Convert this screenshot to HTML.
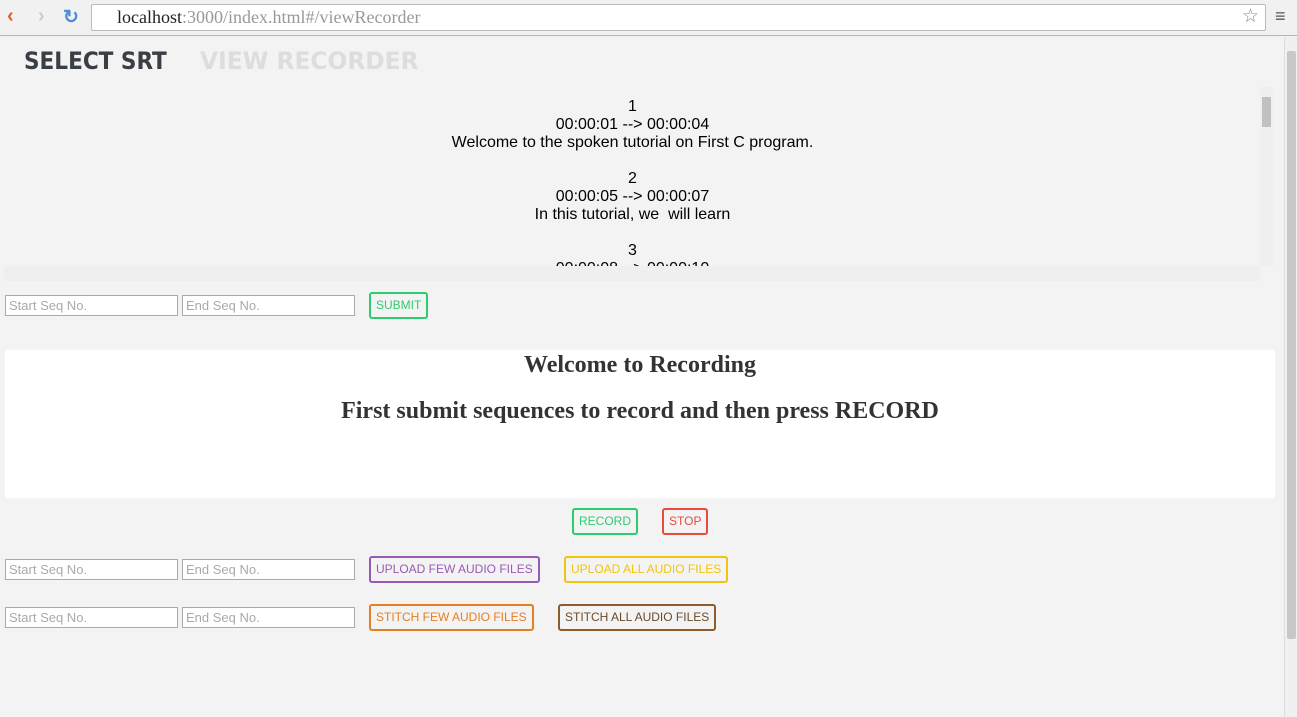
<!DOCTYPE html>
<html><head><meta charset="utf-8"><style>
*{box-sizing:border-box}
body{margin:0;width:1297px;height:717px;overflow:hidden;font-family:"Liberation Sans",sans-serif;background:#f2f2f2;position:relative}
.chrome{position:absolute;left:0;top:0;width:1297px;height:36px;background:#f1f1f1;border-bottom:1px solid #b5b5b5}
.url{position:absolute;left:91px;top:4px;width:1175px;height:27px;background:#fff;border:1px solid #bbb;border-radius:2px;font-family:"Liberation Serif",serif;font-size:18px;line-height:25px;padding-left:25px;color:#999}
.url b{font-weight:normal;color:#222}
.page{position:absolute;left:0;top:37px;width:1284px;height:680px;background:#f3f3f3}
.sb{position:absolute;left:1284px;top:37px;width:13px;height:680px;background:#f0f0f0;border-left:1px solid #ddd}
.sb div{position:absolute;left:2px;top:14px;width:9px;height:588px;background:#c8c8c8;border-radius:2px}
.nav{position:absolute;top:10px;font-family:"DejaVu Sans Condensed","DejaVu Sans",sans-serif;font-weight:bold;font-size:24px;letter-spacing:0px;white-space:nowrap}
.srt{position:absolute;left:0;top:50px;width:1265px;height:229px;text-align:center;font-size:16px;line-height:18px;overflow:hidden}
.hs{position:absolute;left:4px;top:229px;width:1256px;height:15px;background:#efefef}
.vs{position:absolute;left:1260px;top:50px;width:13px;height:179px;background:#efefef}
.vs div{position:absolute;left:2px;top:10px;width:9px;height:30px;background:#c1c1c1}
input{position:absolute;width:173px;height:21px;border:1px solid #aaa;background:#fff;font-size:13px;color:#aaa;padding:2px 3px;font-family:"Liberation Sans",sans-serif}
.btn{position:absolute;height:27px;border:2px solid;border-radius:3px;font-size:12px;line-height:23px;padding:0 5px;background:transparent}
.box{position:absolute;left:5px;top:313px;width:1270px;height:148px;background:#fff;text-align:center;font-family:"Liberation Serif",serif;font-weight:bold;color:#333}
</style></head><body>
<div class="chrome">
<span style="position:absolute;left:7px;top:5px;color:#e0602a;font-size:20px;font-weight:bold">‹</span>
<span style="position:absolute;left:38px;top:5px;color:#ccc;font-size:20px;font-weight:bold">›</span>
<span style="position:absolute;left:63px;top:6px;color:#4a8ed8;font-size:19px;font-weight:bold">↻</span>
<div class="url"><b>localhost</b>:3000/index.html#/viewRecorder</div>
<span style="position:absolute;left:1242px;top:5px;color:#888;font-size:19px">☆</span>
<span style="position:absolute;left:1275px;top:6px;color:#555;font-size:18px">≡</span>
</div>
<div class="page">
<div class="nav" style="left:24px;color:#3a3f45">SELECT SRT</div>
<div class="nav" style="left:200px;color:#ddd;transform:scaleX(1.08);transform-origin:left">VIEW RECORDER</div>
<div class="srt"><div style="padding-top:11px">1<br>00:00:01 --&gt; 00:00:04<br>Welcome to the spoken tutorial on First C program.<br><br>2<br>00:00:05 --&gt; 00:00:07<br>In this tutorial, we &nbsp;will learn<br><br>3<br>00:00:08 --&gt; 00:00:10</div></div>
<div class="vs"><div></div></div>
<div class="hs"></div>
<input style="left:5px;top:258px" value="Start Seq No."><input style="left:182px;top:258px" value="End Seq No.">
<div class="btn" style="left:369px;top:255px;border-color:#2ecc71;color:#2ecc71">SUBMIT</div>
<div class="box"><div style="font-size:24px;padding-top:2px">Welcome to Recording</div><div style="font-size:24px;margin-top:19px">First submit sequences to record and then press RECORD</div></div>
<div class="btn" style="left:572px;top:471px;border-color:#2ecc71;color:#2ecc71">RECORD</div>
<div class="btn" style="left:662px;top:471px;border-color:#e74c3c;color:#e74c3c">STOP</div>
<input style="left:5px;top:522px" value="Start Seq No."><input style="left:182px;top:522px" value="End Seq No.">
<div class="btn" style="left:369px;top:519px;border-color:#9b59b6;color:#9b59b6">UPLOAD FEW AUDIO FILES</div>
<div class="btn" style="left:564px;top:519px;border-color:#f1c40f;color:#f1c40f">UPLOAD ALL AUDIO FILES</div>
<input style="left:5px;top:570px" value="Start Seq No."><input style="left:182px;top:570px" value="End Seq No.">
<div class="btn" style="left:369px;top:567px;border-color:#e67e22;color:#e67e22">STITCH FEW AUDIO FILES</div>
<div class="btn" style="left:558px;top:567px;border-color:#8e5b2f;color:#6b4a2a">STITCH ALL AUDIO FILES</div>
</div>
<div class="sb"><div></div></div>
</body></html>
